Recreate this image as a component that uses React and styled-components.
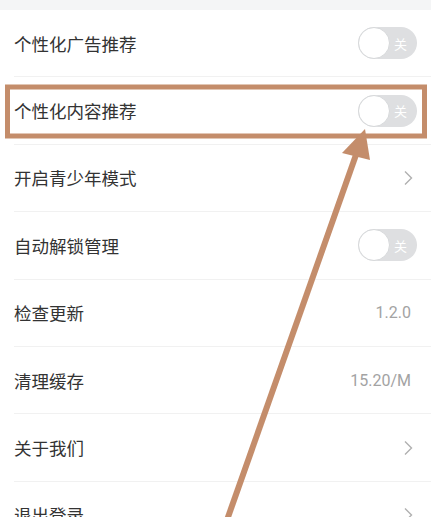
import React from "react";
import styled, { createGlobalStyle } from "styled-components";

const GlobalStyle = createGlobalStyle`
  html, body {
    margin: 0;
    padding: 0;
    background: #ffffff;
    overflow: hidden;
  }
  body {
    font-family: "Roboto", "Noto Sans CJK SC", sans-serif;
  }
`;

const items = [
  { label: "个性化广告推荐", type: "switch" },
  { label: "个性化内容推荐", type: "switch" },
  { label: "开启青少年模式", type: "arrow" },
  { label: "自动解锁管理", type: "switch" },
  { label: "检查更新", type: "value", value: "1.2.0" },
  { label: "清理缓存", type: "value", value: "15.20/M" },
  { label: "关于我们", type: "arrow" },
  { label: "退出登录", type: "arrow" },
];

export default function App() {
  return (
    <>
      <GlobalStyle />
      <Page>
        <TopStrip />
        <List>
          {items.map((item) => (
            <Row key={item.label}>
              <Label>{item.label}</Label>
              {item.type === "switch" && (
                <Switch>
                  <Knob />
                  <SwitchText>关</SwitchText>
                </Switch>
              )}
              {item.type === "arrow" && (
                <Chevron viewBox="0 0 10 16">
                  <path d="M2 1.5 L8.5 8 L2 14.5" />
                </Chevron>
              )}
              {item.type === "value" && <Value>{item.value}</Value>}
            </Row>
          ))}
        </List>

        {/* annotation drawn over the screenshot */}
        <Annotation viewBox="0 0 431 517">
          <rect x="7.5" y="87" width="417" height="49" />
          <line x1="357" y1="152" x2="227" y2="520" />
          <polygon points="365,129 342,153 370,160" />
        </Annotation>
      </Page>
    </>
  );
}

const Page = styled.div`
  position: relative;
  width: 431px;
  height: 517px;
  overflow: hidden;
  background: #ffffff;
`;

const TopStrip = styled.div`
  height: 10px;
  background: #f4f5f6;
`;

const List = styled.div`
  display: flex;
  flex-direction: column;
  padding-left: 14px;
`;

const Row = styled.div`
  display: flex;
  align-items: center;
  justify-content: space-between;
  height: 66.4px;
  padding-right: 14px;
  border-bottom: 1px solid #f1f1f1;
`;

const Label = styled.span`
  font-family: "Noto Sans CJK SC", sans-serif;
  font-size: 17.5px;
  color: #333333;
`;

const Value = styled.span`
  font-family: "Roboto", sans-serif;
  font-size: 16px;
  color: #a3a3a3;
  margin-right: 6px;
`;

const Switch = styled.div`
  position: relative;
  display: flex;
  align-items: center;
  justify-content: flex-end;
  width: 59px;
  height: 32px;
  border-radius: 16px;
  background: #dedfe1;
  box-sizing: border-box;
  padding-right: 10px;
`;

const Knob = styled.div`
  position: absolute;
  left: 0;
  top: 0;
  width: 32px;
  height: 32px;
  border-radius: 50%;
  background: #ffffff;
  box-sizing: border-box;
  border: 1.5px solid #d6d8da;
`;

const SwitchText = styled.span`
  font-family: "Noto Sans CJK SC", sans-serif;
  font-size: 13px;
  color: #ffffff;
`;

const Chevron = styled.svg`
  width: 10px;
  height: 16px;
  margin-right: 4px;
  fill: none;
  stroke: #b0b0b0;
  stroke-width: 1.4;
`;

const Annotation = styled.svg`
  position: absolute;
  left: 0;
  top: 0;
  width: 431px;
  height: 517px;
  pointer-events: none;

  rect {
    fill: none;
    stroke: #c48d6b;
    stroke-width: 5;
  }
  line {
    stroke: #c48d6b;
    stroke-width: 6;
  }
  polygon {
    fill: #c48d6b;
  }
`;
